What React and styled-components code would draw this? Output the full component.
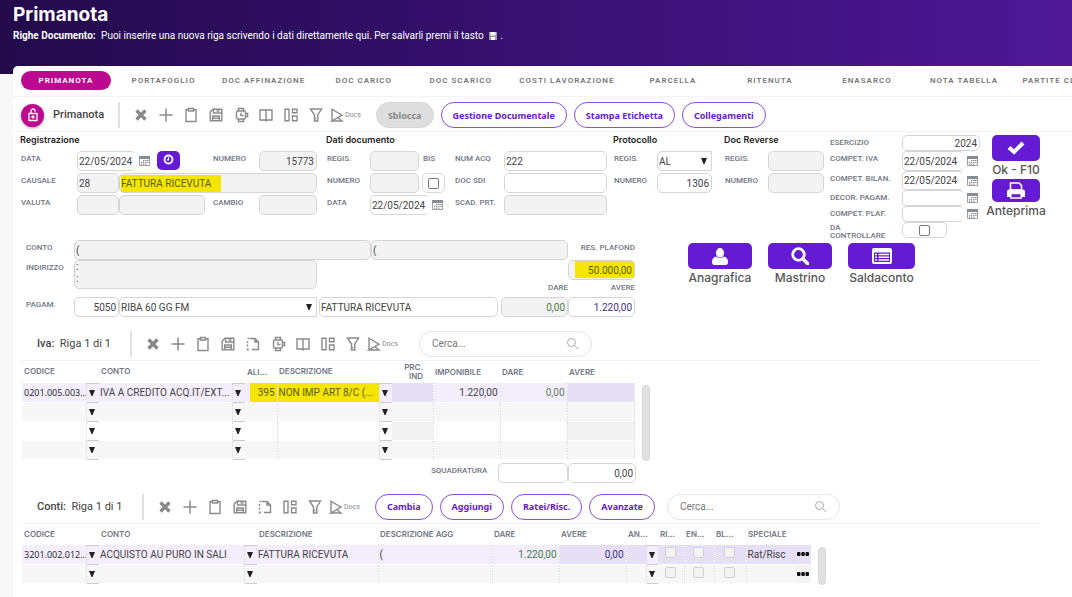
import React from 'react';
import styled, { createGlobalStyle, css } from 'styled-components';

const GlobalStyle = createGlobalStyle`
  * {
    box-sizing: border-box;
  }
  body {
    margin: 0;
    background: #f8f8f8;
    font-family: Roboto, 'Liberation Sans', sans-serif;
    font-size: 10px;
    color: #444;
    overflow: hidden;
  }
  button,
  input,
  select,
  textarea {
    font-family: inherit;
    font-size: inherit;
    color: inherit;
    margin: 0;
  }
  h1,
  h2,
  h3,
  p {
    margin: 0;
  }
`;

const Header = styled.header`
  height: 74px;
  padding: 4px 13px 0;
  color: #fff;
  background: linear-gradient(90deg, #230a4b 0%, #35106d 45%, #4e1896 100%);
`;

const PageTitle = styled.h1`
  font-family: Inter, sans-serif;
  font-size: 19px;
  line-height: 21px;
  font-weight: 700;
`;

const Hint = styled.p`
  display: flex;
  align-items: center;
  margin-top: 3px;
  font-size: 10px;
  line-height: 15px;
  white-space: pre;
  strong {
    margin-right: 3px;
  }
  svg {
    margin: 0 3px;
  }
`;

const Shell = styled.main`
  position: relative;
  margin: -8px 0 0 13px;
  padding-bottom: 14px;
  background: #fff;
  border-radius: 5px 0 0 0;
  overflow: hidden;
`;

const Tabs = styled.nav`
  display: flex;
  height: 31px;
  padding: 5px 0 0 4px;
  border-bottom: 1px solid #f3f3f3;
`;

const Tab = styled.a`
  flex: none;
  min-width: 97px;
  height: 19px;
  padding: 0 10px;
  font-size: 8px;
  line-height: 19px;
  letter-spacing: 1px;
  font-weight: 600;
  text-align: center;
  text-decoration: none;
  color: #777;
  ${({ $active }) =>
    $active &&
    css`
      min-width: 90px;
      margin: 0 4px;
      border-radius: 10px;
      background: #bb0a90;
      color: #fff;
      font-weight: 700;
    `}
`;

const Toolbar = styled.div`
  display: flex;
  align-items: center;
  height: ${({ $h }) => $h}px;
  margin-left: ${({ $ml }) => $ml || 0}px;
  margin-right: ${({ $mr }) => $mr || 0}px;
  padding: ${({ $top, $bottom, $pl }) => `${$top || 0}px 0 ${$bottom || 0}px ${$pl}px`};
  border-bottom: 1px solid #f3f3f3;
`;

const LockButton = styled.button`
  display: flex;
  align-items: center;
  justify-content: center;
  width: 23px;
  height: 23px;
  padding: 0;
  border: 0;
  border-radius: 50%;
  background: #bb0a90;
  box-shadow: 0 1px 3px rgba(0, 0, 0, 0.35);
`;

const ToolbarTitle = styled.h2`
  width: ${({ $w }) => $w}px;
  margin-left: ${({ $ml }) => $ml || 0}px;
  font-size: 11px;
  line-height: 14px;
  font-weight: 500;
  color: #444;
  white-space: pre;
  span {
    font-weight: 400;
  }
`;

const Divider = styled.span`
  width: 2px;
  height: 26px;
  margin-right: 9px;
  background: #e2e2e2;
`;

const ToolButton = styled.button`
  display: flex;
  align-items: center;
  justify-content: center;
  min-width: 25px;
  height: 24px;
  padding: 0 1px 0 0;
  border: 0;
  background: none;
  color: #8a8a8a;
  font-size: 7px;
  svg {
    display: block;
    flex: none;
  }
`;

const Pill = styled.button`
  height: 26px;
  padding: 0 11px;
  margin-right: 7px;
  border: 1px solid #8a4fe0;
  border-radius: 13px;
  background: #fff;
  color: #651ad3;
  font-family: 'Noto Sans', sans-serif;
  font-size: 9px;
  font-weight: 700;
  white-space: nowrap;
  &:first-of-type {
    margin-left: 14px;
  }
  &:disabled {
    border-color: #d6d6d6;
    background: #dedede;
    color: #888;
  }
`;

const Pills = styled.div`
  display: flex;
`;

const SearchBox = styled.label`
  display: flex;
  align-items: center;
  width: 173px;
  height: 26px;
  margin-left: ${({ $ml }) => $ml}px;
  padding: 0 12px;
  border: 1px solid #e6e6e6;
  border-radius: 13px;
  input {
    flex: 1;
    min-width: 0;
    padding: 0;
    border: 0;
    outline: 0;
    background: none;
    font-size: 10px;
  }
  input::placeholder {
    color: #777;
  }
`;

const FormRow = styled.div`
  display: flex;
  align-items: flex-start;
  height: 108px;
  padding: 3px 0 0 7px;
`;

const Group = styled.section`
  display: flex;
  flex-direction: column;
  gap: 2px;
  width: ${({ $w }) => $w}px;
  flex: none;
`;

const GroupTitle = styled.h3`
  height: 14px;
  font-family: Inter, sans-serif;
  font-size: 9px;
  line-height: 9px;
  font-weight: 600;
  color: #222;
`;

const Line = styled.div`
  display: grid;
  grid-template-columns: ${({ $cols }) => $cols};
  height: ${({ $h }) => $h || 20}px;
  flex: none;
`;

const Label = styled.label`
  padding: 3px 0 0 1px;
  font-size: 8px;
  line-height: 10px;
  font-weight: 500;
  color: #707783;
  white-space: nowrap;
  text-align: ${({ $right }) => ($right ? 'right' : 'left')};
  overflow: hidden;
  ${({ $wrap }) =>
    $wrap &&
    css`
      padding: 2px 8px 0 1px;
      line-height: 8px;
      white-space: normal;
    `}
`;

const fieldStyle = css`
  display: block;
  width: 100%;
  min-width: 0;
  height: 100%;
  padding: 0 2px 0 1px;
  border: 1px solid #d5d5d5;
  border-radius: 5px;
  background: #fff;
  color: #444;
  font-size: 10px;
  outline: 0;
`;

const Field = styled.input`
  ${fieldStyle}
  text-align: ${({ $right }) => ($right ? 'right' : 'left')};
  color: ${({ $color }) => $color || '#444'};
  ${({ readOnly }) =>
    readOnly &&
    css`
      background: #f3f3f3;
    `}
  ${({ $mark }) =>
    $mark &&
    css`
      background: linear-gradient(#f4e600, #f4e600) no-repeat ${$mark}, #f3f3f3;
      color: #5d5a10;
    `}
`;

const SelectWrap = styled.div`
  display: flex;
  align-items: center;
  position: relative;
  min-width: 0;
  height: 100%;
  svg {
    position: absolute;
    right: 5px;
    pointer-events: none;
  }
`;

const Select = styled.select`
  ${fieldStyle}
  appearance: none;
  border-radius: 5px 0 0 5px;
`;

const DateWrap = styled.div`
  display: flex;
  align-items: center;
  gap: 3px;
  input {
    width: ${({ $w }) => $w || 59}px;
    border-right-color: transparent;
  }
`;

const IconButton = styled.button`
  display: flex;
  align-items: center;
  padding: 0;
  border: 0;
  background: none;
`;

const ClockButton = styled.button`
  display: flex;
  justify-content: center;
  align-items: center;
  width: 23px;
  height: 19px;
  padding: 0 0 3px;
  border: 0;
  border-radius: 5px;
  background: #651ad3;
`;

const CheckFrame = styled.span`
  display: flex;
  align-items: center;
  justify-content: center;
  width: ${({ $w }) => $w || 23}px;
  height: 100%;
  border: 1px solid #d8d8d8;
  border-radius: 5px;
`;

const Check = styled.input`
  appearance: none;
  display: block;
  width: 11px;
  height: 11px;
  border: 1px solid #777;
  border-radius: 2px;
  background: #fff;
  ${({ $pale }) =>
    $pale &&
    css`
      margin: 0 auto 3px;
      border-color: #d0d0d0;
      background: #f3f3f3;
    `}
`;

const Dates = styled.section`
  width: 151px;
  flex: none;
`;

const Actions = styled.div`
  display: flex;
  flex-direction: column;
  align-items: center;
  width: 58px;
  margin-left: 7px;
`;

const Action = styled.button`
  display: flex;
  flex-direction: column;
  align-items: center;
  padding: 0;
  border: 0;
  background: none;
  font-family: Inter, sans-serif;
  font-size: 12px;
  line-height: 18px;
  font-weight: 500;
  color: #555;
  white-space: nowrap;
`;

const ActionFace = styled.span`
  display: flex;
  align-items: center;
  justify-content: center;
  width: ${({ $w }) => $w}px;
  height: ${({ $h }) => $h || 26}px;
  border-radius: 5px;
  background: #651ad3;
`;

const AccountRow = styled.div`
  display: flex;
  padding-left: 12px;
  height: 91px;
`;

const AccountGrid = styled.section`
  display: grid;
  grid-template-columns: 49px 45px 200px 52px 130px 67px 67px;
  grid-template-rows: 20px 20px 17px 20px;
`;

const Slot = styled.div`
  grid-column: ${({ $col }) => $col};
  grid-row: ${({ $row }) => $row};
  margin-right: ${({ $mr }) => $mr || 0}px;
  min-width: 0;
  display: grid;
`;

const Address = styled.textarea`
  ${fieldStyle}
  height: 29px;
  resize: none;
  background: #f3f3f3;
  line-height: 12px;
`;

const BigActions = styled.div`
  display: flex;
  gap: 16px;
  margin: 3px 0 0 53px;
`;

const Panel = styled.section`
  margin-left: 9px;
  display: flex;
  align-items: flex-start;
  gap: 7px;
`;

const Grid = styled.table`
  flex: none;
  width: ${({ $w }) => $w}px;
  border-collapse: collapse;
  table-layout: fixed;
`;

const Th = styled.th`
  height: ${({ $h }) => $h}px;
  padding: 0 ${({ $right }) => ($right ? 10 : 2)}px 0 2px;
  font-family: Inter, sans-serif;
  font-size: 8px;
  line-height: 9px;
  font-weight: 600;
  color: #707783;
  text-align: ${({ $right }) => ($right ? 'right' : 'left')};
  white-space: ${({ $right }) => ($right ? 'normal' : 'nowrap')};
`;

const Td = styled.td`
  height: 19px;
  padding: 0 2px 0 1px;
  overflow: hidden;
  white-space: nowrap;
  border-bottom: 1px solid #fff;
  border-right: ${({ $line }) => ($line ? '1px dotted #d9d9d9' : '0')};
  text-align: ${({ $align }) => $align || 'left'};
  color: ${({ $color }) => $color || '#444'};
  background: ${({ $bg }) => $bg || 'transparent'};
  ${({ $code }) =>
    $code &&
    css`
      padding: 0 0 0 2px;
      font-family: 'Open Sans', sans-serif;
      font-size: 9px;
      color: #222;
    `}
`;

const ArrowTd = styled.td`
  height: 19px;
  padding: 0;
  border-left: 1px dotted #d9d9d9;
  border-top: 1px solid #ccc;
  border-bottom: 1px solid #ccc;
  button {
    display: flex;
    align-items: center;
    justify-content: center;
    width: 11px;
    height: 17px;
    padding: 0;
    border: 0;
    background: none;
  }
`;

const Row = styled.tr`
  background: ${({ $tone }) => $tone};
`;

const ScrollThumb = styled.div`
  width: 8px;
  height: ${({ $h }) => $h}px;
  margin-top: ${({ $mt }) => $mt}px;
  border-radius: 4px;
  border: 1px solid #d6d6d6;
  background: #e0e0e0;
`;

const Totals = styled.div`
  display: grid;
  grid-template-columns: 68px 70px 68px;
  height: 20px;
  margin: 2px 0 11px 417px;
`;

const Svg = ({ size = 16, children, ...rest }) => (
  <svg width={size} height={size} viewBox='0 0 16 16' fill='none' stroke='currentColor' strokeWidth='1.4' {...rest}>
    {children}
  </svg>
);

const icons = {
  close: (
    <Svg>
      <path d='M3.500 3.500l9 9M12.500 3.500l-9 9' strokeWidth='3.400' />
    </Svg>
  ),
  add: (
    <Svg>
      <path d='M8 1.500v13M1.500 8h13' strokeWidth='1.500' />
    </Svg>
  ),
  clipboard: (
    <Svg>
      <path d='M5.500 2.700H3v11.800h10V2.700h-2.500' />
      <path d='M5.500 1.500h5v2.500h-5z' />
    </Svg>
  ),
  save: (
    <Svg>
      <path d='M5 2.200h8.800v11.600H2.200V5z' />
      <path d='M5.500 2.200v3.800h8.300M4.700 13.800V9h6.600v4.800M4.700 11.300h6.600M8.500 4h3' />
    </Svg>
  ),
  insert: (
    <Svg>
      <path d='M5 2.500h5l3.500 3.500v7.500H7M10 2.500V6h3.500' />
      <path d='M2.500 2.500h2M2.500 5v6' strokeDasharray='2 1.500' />
      <path d='M1.700 12.500h2v2h-2z' fill='currentColor' stroke='none' />
    </Svg>
  ),
  watch: (
    <Svg>
      <path d='M5.500 4V1.500h5V4M5.500 12v2.500h5V12' />
      <rect x='3.500' y='4' width='9' height='8' rx='1.500' />
      <path d='M7.800 5.800v2.700h2.700M13 6.500h1.700v3H13' strokeWidth='1.300' />
    </Svg>
  ),
  book: (
    <Svg>
      <path d='M2 3h12v10H9.500L8 14l-1.500-1H2zM8 3v10.500' />
    </Svg>
  ),
  layout: (
    <Svg>
      <path d='M2 2.200h4v11.600H2zM9.500 2.200H14v3.600H9.500zM9.500 9h4.500v4.800H9.500z' />
    </Svg>
  ),
  filter: (
    <Svg>
      <path d='M2.500 2h11L9.800 8v6H6.500V8zM6.500 11.500h1.800' />
    </Svg>
  ),
  docs: (
    <Svg>
      <path d='M3 14V2.200l10 6L3 14h10L9 10.800' />
    </Svg>
  ),
};

const toolNames = {
  close: 'Elimina',
  add: 'Aggiungi',
  clipboard: 'Incolla',
  save: 'Salva',
  insert: 'Inserisci',
  watch: 'Storico',
  book: 'Apri',
  layout: 'Layout',
  filter: 'Filtra',
  docs: 'Docs',
};

const Tools = ({ names }) =>
  names.map((name) => (
    <ToolButton key={name} aria-label={toolNames[name]}>
      {icons[name]}
      {name === 'docs' && 'Docs'}
    </ToolButton>
  ));

const Triangle = () => (
  <svg width='6' height='6' viewBox='0 0 6 6'>
    <path d='M0 0h6L3.500 6h-1z' fill='#222' />
  </svg>
);

const Calendar = () => (
  <IconButton aria-label='Calendario'>
    <svg width='11' height='10' viewBox='0 0 11 10'>
      <path d='M.5.500h10v9H.5z' fill='#fff' stroke='#99a0a8' />
      <path d='M0 0h11v3H0z' fill='#858c94' />
      <path d='M4 4.500h1.300M6.200 4.500h1.300M8.200 4.500h1.300M2 6.300h1.300M4 6.300h1.300M6.200 6.300h1.300M8.200 6.300h1.300M2 8.100h1.300M4 8.100h1.300M6.200 8.100h1.300' stroke='#777' />
    </svg>
  </IconButton>
);

const Search = ({ id, ml }) => (
  <SearchBox $ml={ml} htmlFor={id}>
    <input id={id} placeholder='Cerca...' aria-label='Cerca' />
    <svg width='13' height='13' viewBox='0 0 13 13' fill='none' stroke='#aaa'>
      <circle cx='5.500' cy='5.500' r='4' />
      <path d='M8.500 8.500l3.500 3.500' />
    </svg>
  </SearchBox>
);

const DateField = ({ id, value, w }) => (
  <DateWrap $w={w}>
    <Field id={id} defaultValue={value} />
    <Calendar />
  </DateWrap>
);

const Dropdown = ({ id, value, label }) => (
  <SelectWrap>
    <Select id={id} aria-label={label}>
      <option>{value}</option>
    </Select>
    <Triangle />
  </SelectWrap>
);

const tabs = [
  'PORTAFOGLIO',
  'DOC AFFINAZIONE',
  'DOC CARICO',
  'DOC SCARICO',
  'COSTI LAVORAZIONE',
  'PARCELLA',
  'RITENUTA',
  'ENASARCO',
  'NOTA TABELLA',
  'PARTITE CLIENTI',
];

const ArrowCell = () => (
  <ArrowTd>
    <button aria-label='Apri elenco'>
      <Triangle />
    </button>
  </ArrowTd>
);

const rowTones = ['#f3edfc', '#f7f7f7', '#fff', '#f7f7f7'];
const cellTones = ['#e7dff5', '#f7f7f7', '#f3f3f3', '#f7f7f7'];

const ivaRows = [
  { code: '0201.005.003...', conto: 'IVA A CREDITO ACQ.IT/EXT...', ali: '395', desc: 'NON IMP ART 8/C (...', imp: '1.220,00', dare: '0,00' },
  {},
  {},
  {},
];

const IvaTable = () => (
  <Grid $w={612}>
    <colgroup>
      {[64, 13, 133, 13, 32, 102, 13, 41, 67, 67, 67].map((w, i) => (
        <col key={i} width={w} />
      ))}
    </colgroup>
    <thead>
      <tr>
        <Th $h={22} colSpan={2}>CODICE</Th>
        <Th colSpan={2}>CONTO</Th>
        <Th>ALI...</Th>
        <Th colSpan={2}>DESCRIZIONE</Th>
        <Th $right>PRC. IND</Th>
        <Th>IMPONIBILE</Th>
        <Th>DARE</Th>
        <Th>AVERE</Th>
      </tr>
    </thead>
    <tbody>
      {ivaRows.map((row, i) => (
        <Row key={i} $tone={rowTones[i]}>
          <Td $code>{row.code}</Td>
          <ArrowCell />
          <Td>{row.conto}</Td>
          <ArrowCell />
          <Td
            $line
            $align='right'
            $bg={row.ali && 'linear-gradient(90deg, transparent 5px, #f4e600 5px)'}
            $color='#5d5a10'
          >
            {row.ali}
          </Td>
          <Td $bg={row.desc && '#f4e600'} $color='#5d5a10'>{row.desc}</Td>
          <ArrowCell />
          <Td $line $bg={cellTones[i]} />
          <Td $line $align='right'>{row.imp}</Td>
          <Td $line $align='right' $color='#5f7d5f'>{row.dare}</Td>
          <Td $line $bg={cellTones[i]} />
        </Row>
      ))}
    </tbody>
  </Grid>
);

const contiRows = [
  { code: '3201.002.012...', conto: 'ACQUISTO AU PURO IN SALI', desc: 'FATTURA RICEVUTA', agg: '(', dare: '1.220,00', avere: '0,00', special: 'Rat/Risc' },
  {},
];

const ContiTable = () => (
  <Grid $w={789}>
    <colgroup>
      {[64, 13, 145, 13, 121, 114, 67, 67, 20, 12, 26, 30, 32, 50, 15].map((w, i) => (
        <col key={i} width={w} />
      ))}
    </colgroup>
    <thead>
      <tr>
        <Th $h={21} colSpan={2}>CODICE</Th>
        <Th colSpan={2}>CONTO</Th>
        <Th>DESCRIZIONE</Th>
        <Th>DESCRIZIONE AGG</Th>
        <Th>DARE</Th>
        <Th>AVERE</Th>
        <Th colSpan={2}>AN...</Th>
        <Th>RI...</Th>
        <Th>EN...</Th>
        <Th>BL...</Th>
        <Th colSpan={2}>SPECIALE</Th>
      </tr>
    </thead>
    <tbody>
      {contiRows.map((row, i) => {
        const tone = i === 0 ? '#e7dff5' : '#f7f7f7';
        return (
          <Row key={i} $tone={rowTones[i]}>
            <Td $code>{row.code}</Td>
            <ArrowCell />
            <Td>{row.conto}</Td>
            <ArrowCell />
            <Td $line>{row.desc}</Td>
            <Td $line>{row.agg}</Td>
            <Td $line $align='right' $color='#3f7f3f'>{row.dare}</Td>
            <Td $line $align='right' $color='#3a3390' $bg={tone}>{row.avere}</Td>
            <Td $bg={tone} />
            <ArrowCell />
            {['Ri', 'En', 'Bl'].map((name) => (
              <Td key={name} $line $align='center' $bg={tone}>
                <Check type='checkbox' $pale aria-label={`${name} riga ${i + 1}`} />
              </Td>
            ))}
            <Td $bg={tone}>{row.special}</Td>
            <Td $bg={i ? '#f3f3f3' : tone}>
              <IconButton aria-label='Altro'>
                <svg width='12' height='4' viewBox='0 0 12 4'>
                  <path d='M0 1q0-1 1-1h1.500q1 0 1 1v2q0 1-1 1H1q-1 0-1-1zM4.300 1q0-1 1-1h1.500q1 0 1 1v2q0 1-1 1H5.300q-1 0-1-1zM8.500 1q0-1 1-1H11q1 0 1 1v2q0 1-1 1H9.500q-1 0-1-1z' fill='#111' />
                </svg>
              </IconButton>
            </Td>
          </Row>
        );
      })}
    </tbody>
  </Grid>
);

const Registration = () => (
  <Group $w={306}>
    <GroupTitle>Registrazione</GroupTitle>
    <Line $cols='57px 80px 55px 47px 58px'>
      <Label htmlFor='data'>DATA</Label>
      <DateField id='data' value='22/05/2024' />
      <ClockButton aria-label='Ora'>
        <svg width='11' height='11' viewBox='0 0 11 11' fill='none' stroke='#fff'>
          <circle cx='5.500' cy='5.500' r='4' strokeWidth='1.800' />
          <path d='M5.500 3.200v2.600H3.800' strokeWidth='1.200' />
        </svg>
      </ClockButton>
      <Label htmlFor='numero'>NUMERO</Label>
      <Field id='numero' readOnly $right value='15773' />
    </Line>
    <Line $cols='57px 42px 198px'>
      <Label htmlFor='causale'>CAUSALE</Label>
      <Field id='causale' readOnly value='28' />
      <Field readOnly $mark='1px 1px / 100px 17px' aria-label='Descrizione causale' value='FATTURA RICEVUTA' />
    </Line>
    <Line $cols='57px 42px 86px 7px 47px 58px'>
      <Label htmlFor='valuta'>VALUTA</Label>
      <Field id='valuta' readOnly value='' />
      <Field readOnly aria-label='Descrizione valuta' value='' />
      <span />
      <Label htmlFor='cambio'>CAMBIO</Label>
      <Field id='cambio' readOnly value='' />
    </Line>
  </Group>
);

const DocumentData = () => (
  <Group $w={287}>
    <GroupTitle>Dati documento</GroupTitle>
    <Line $cols='44px 52px 32px 50px 103px'>
      <Label htmlFor='regis'>REGIS.</Label>
      <Slot $mr={3}>
        <Field id='regis' readOnly value='' />
      </Slot>
      <Label htmlFor='bis'>BIS</Label>
      <Label htmlFor='numacq'>NUM ACQ</Label>
      <Field id='numacq' defaultValue='222' />
    </Line>
    <Line $cols='44px 52px 32px 50px 103px'>
      <Label htmlFor='docnum'>NUMERO</Label>
      <Slot $mr={3}>
        <Field id='docnum' readOnly value='' />
      </Slot>
      <CheckFrame>
        <Check id='bis' type='checkbox' />
      </CheckFrame>
      <Label htmlFor='sdi'>DOC SDI</Label>
      <Field id='sdi' defaultValue='' />
    </Line>
    <Line $cols='44px 84px 50px 103px'>
      <Label htmlFor='docdata'>DATA</Label>
      <DateField id='docdata' value='22/05/2024' />
      <Label htmlFor='scad'>SCAD. PRT.</Label>
      <Field id='scad' readOnly value='' />
    </Line>
  </Group>
);

const Competence = () => (
  <Dates>
    <Line $cols='73px 78px' $h={16}>
      <Label htmlFor='esercizio'>ESERCIZIO</Label>
      <Field id='esercizio' $right defaultValue='2024' />
    </Line>
    <Line $cols='73px 78px' $h={20}>
      <Label htmlFor='iva'>COMPET. IVA</Label>
      <DateField id='iva' value='22/05/2024' w={62} />
    </Line>
    <Line $cols='73px 78px' $h={19}>
      <Label htmlFor='bilan'>COMPET. BILAN.</Label>
      <DateField id='bilan' value='22/05/2024' w={62} />
    </Line>
    <Line $cols='73px 78px' $h={16}>
      <Label htmlFor='decor'>DECOR. PAGAM.</Label>
      <DateField id='decor' value='' w={62} />
    </Line>
    <Line $cols='73px 78px' $h={16}>
      <Label htmlFor='plaf'>COMPET. PLAF.</Label>
      <DateField id='plaf' value='' w={62} />
    </Line>
    <Line $cols='73px 78px' $h={16}>
      <Label htmlFor='controllare' $wrap>DA CONTROLLARE</Label>
      <CheckFrame $w={45}>
        <Check id='controllare' type='checkbox' />
      </CheckFrame>
    </Line>
  </Dates>
);

const Account = () => (
  <AccountGrid>
    <Label htmlFor='conto'>CONTO</Label>
    <Slot $col='2 / 5' $row='1'>
      <Field id='conto' readOnly value='(' />
    </Slot>
    <Slot $col='5 / 7' $row='1'>
      <Field readOnly aria-label='Dettaglio conto' value='(' />
    </Slot>
    <Slot $col='7' $row='1'>
      <Label htmlFor='plafond' $right>RES. PLAFOND</Label>
    </Slot>
    <Slot $col='1' $row='2'>
      <Label htmlFor='indirizzo'>INDIRIZZO</Label>
    </Slot>
    <Slot $col='2 / 4' $row='2 / 4' $mr={2}>
      <Address id='indirizzo' readOnly value={':\n:'} />
    </Slot>
    <Slot $col='7' $row='2'>
      <Field id='plafond' readOnly $right $mark='6px 0 / 60px 17px' value='50.000,00' />
    </Slot>
    <Slot $col='6' $row='3'>
      <Label htmlFor='dare' $right>DARE</Label>
    </Slot>
    <Slot $col='7' $row='3'>
      <Label htmlFor='avere' $right>AVERE</Label>
    </Slot>
    <Slot $col='1' $row='4'>
      <Label htmlFor='pagam'>PAGAM.</Label>
    </Slot>
    <Slot $col='2' $row='4'>
      <Field id='pagam' $right defaultValue='5050' />
    </Slot>
    <Slot $col='3' $row='4' $mr={2}>
      <Dropdown value='RIBA 60 GG FM' label='Pagamento' />
    </Slot>
    <Slot $col='4 / 6' $row='4' $mr={3}>
      <Field aria-label='Descrizione' defaultValue='FATTURA RICEVUTA' />
    </Slot>
    <Slot $col='6' $row='4'>
      <Field id='dare' readOnly $right $color='#4f7a45' value='0,00' />
    </Slot>
    <Slot $col='7' $row='4'>
      <Field id='avere' $right $color='#3a3390' defaultValue='1.220,00' />
    </Slot>
  </AccountGrid>
);

const App = () => (
  <>
    <GlobalStyle />
    <Header>
      <PageTitle>Primanota</PageTitle>
      <Hint>
        <strong>Righe Documento:</strong>
        {' Puoi inserire una nuova riga scrivendo i dati direttamente qui. Per salvarli premi il tasto '}
        <svg width='8' height='8' viewBox='0 0 8 8'>
          <path d='M0 0h8v8H0z' fill='#999' />
          <path d='M1.500 0h5v3.500h-5zM2 5h4v3H2z' fill='#fff' />
        </svg>
        .
      </Hint>
    </Header>
    <Shell>
      <Tabs>
        <Tab href='#primanota' $active>PRIMANOTA</Tab>
        {tabs.map((tab) => (
          <Tab key={tab} href='#tab'>{tab}</Tab>
        ))}
      </Tabs>
      <Toolbar $h={35} $pl={8} $top={2}>
        <LockButton aria-label='Blocca'>
          <svg width='12' height='14' viewBox='0 0 12 14' fill='none' stroke='#fff' strokeWidth='1.300'>
            <path d='M2 5.500h8v7H2zM4 5.500V3a2 2 0 0 1 4 0v.8M6 7.300v3.400M4.300 9h3.400' />
          </svg>
        </LockButton>
        <ToolbarTitle $w={65} $ml={9}>Primanota</ToolbarTitle>
        <Divider />
        <Tools names={['close', 'add', 'clipboard', 'save', 'watch', 'book', 'layout', 'filter', 'docs']} />
        <Pills>
          <Pill disabled>Sblocca</Pill>
          <Pill>Gestione Documentale</Pill>
          <Pill>Stampa Etichetta</Pill>
          <Pill>Collegamenti</Pill>
        </Pills>
      </Toolbar>
      <FormRow>
        <Registration />
        <DocumentData />
        <Group $w={111}>
          <GroupTitle>Protocollo</GroupTitle>
          <Line $cols='44px 55px'>
            <Label htmlFor='protreg'>REGIS.</Label>
            <Dropdown id='protreg' value='AL' />
          </Line>
          <Line $cols='44px 55px'>
            <Label htmlFor='protnum'>NUMERO</Label>
            <Field id='protnum' $right defaultValue='1306' />
          </Line>
        </Group>
        <Group $w={105}>
          <GroupTitle>Doc Reverse</GroupTitle>
          <Line $cols='44px 56px'>
            <Label htmlFor='revreg'>REGIS.</Label>
            <Field id='revreg' readOnly value='' />
          </Line>
          <Line $cols='44px 56px'>
            <Label htmlFor='revnum'>NUMERO</Label>
            <Field id='revnum' readOnly value='' />
          </Line>
        </Group>
        <Competence />
        <Actions>
          <Action>
            <ActionFace $w={48}>
              <svg width='18' height='14' viewBox='0 0 18 14' fill='none' stroke='#fff' strokeWidth='4'>
                <path d='M2 6.500l5 4.500 9-9' />
              </svg>
            </ActionFace>
            Ok - F10
          </Action>
          <Action>
            <ActionFace $w={48} $h={23}>
              <svg width='18' height='18' viewBox='0 0 18 18'>
                <path d='M3.500 1h8.500l2.500 2.500V8h-11z' fill='#651ad3' stroke='#fff' strokeWidth='1.600' />
                <path d='M0 9.500Q0 7.500 2 7.500h14q2 0 2 2V15h-3v-3H3v3H0z' fill='#fff' />
                <path d='M3.800 11.500h10.400V16H3.800z' fill='#651ad3' stroke='#fff' strokeWidth='1.600' />
              </svg>
            </ActionFace>
            Anteprima
          </Action>
        </Actions>
      </FormRow>
      <AccountRow>
        <Account />
        <BigActions>
          <Action>
            <ActionFace $w={64}>
              <svg width='16' height='17' viewBox='0 0 16 17' fill='#fff'>
                <ellipse cx='8' cy='4.800' rx='4' ry='4.800' />
                <path d='M4 8.500q4 3 8 0 4 1 4 5.500 0 3-2.500 3h-11Q0 17 0 14q0-4.500 4-5.500z' />
              </svg>
            </ActionFace>
            Anagrafica
          </Action>
          <Action>
            <ActionFace $w={64}>
              <svg width='18' height='18' viewBox='0 0 18 18' fill='none' stroke='#fff'>
                <circle cx='7.500' cy='7.500' r='5.800' strokeWidth='2.800' />
                <path d='M12 12l4.500 4.500' strokeWidth='3.500' strokeLinecap='round' />
              </svg>
            </ActionFace>
            Mastrino
          </Action>
          <Action>
            <ActionFace $w={67}>
              <svg width='20' height='16' viewBox='0 0 20 16'>
                <rect width='20' height='16' rx='2' fill='#fff' />
                <path d='M2 4.500h16v9.500H2z' fill='#651ad3' />
                <path d='M3 6.500h2M6.500 6.500H17M3 9.200h2M6.500 9.200H17M3 12h2M6.500 12H17' stroke='#fff' strokeWidth='1.400' />
              </svg>
            </ActionFace>
            Saldaconto
          </Action>
        </BigActions>
      </AccountRow>
      <Toolbar $h={30} $pl={15} $ml={9} $mr={32} $bottom={4}>
        <ToolbarTitle $w={93}>
          Iva:  <span>Riga 1 di 1</span>
        </ToolbarTitle>
        <Divider />
        <Tools names={['close', 'add', 'clipboard', 'save', 'insert', 'watch', 'book', 'layout', 'filter', 'docs']} />
        <Search id='search-iva' ml={20} />
      </Toolbar>
      <Panel>
        <IvaTable />
        <ScrollThumb $h={76} $mt={24} />
      </Panel>
      <Totals>
        <Label>SQUADRATURA</Label>
        <Field aria-label='Squadratura dare' defaultValue='' />
        <Field aria-label='Squadratura avere' $right defaultValue='0,00' />
      </Totals>
      <Toolbar $h={30} $pl={15} $ml={9} $mr={32} $bottom={4}>
        <ToolbarTitle $w={105}>
          Conti:  <span>Riga 1 di 1</span>
        </ToolbarTitle>
        <Divider />
        <Tools names={['close', 'add', 'clipboard', 'save', 'insert', 'layout', 'filter', 'docs']} />
        <Pills>
          <Pill>Cambia</Pill>
          <Pill>Aggiungi</Pill>
          <Pill>Ratei/Risc.</Pill>
          <Pill>Avanzate</Pill>
        </Pills>
        <Search id='search-conti' ml={5} />
      </Toolbar>
      <Panel>
        <ContiTable />
        <ScrollThumb $h={38} $mt={23} />
      </Panel>
    </Shell>
  </>
);

export default App;
